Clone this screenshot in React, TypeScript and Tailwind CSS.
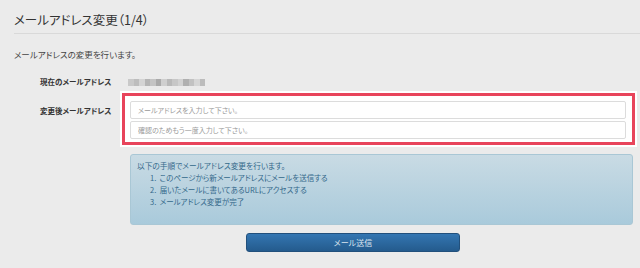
import React from 'react';

const steps = [
  'このページから新メールアドレスにメールを送信する',
  '届いたメールに書いてあるURLにアクセスする',
  'メールアドレス変更が完了',
];

// pixel shades for the masked current address
const maskShades = ['#c9c9c9', '#bdbdbd', '#d4d4d4', '#b5b5b5', '#c4c4c4', '#aaaaaa', '#cfcfcf', '#b9b9b9', '#c7c7c7', '#d2d2d2', '#b0b0b0', '#c2c2c2', '#d6d6d6', '#bcbcbc'];

export default function App() {
  return (
    <div className="w-[640px] h-[268px] overflow-hidden bg-[#ebebeb] text-[#333] font-['Noto_Sans_CJK_JP','Noto_Sans',sans-serif] [font-feature-settings:'palt']">
      {/* Header */}
      <div className="pl-[14px]">
        <h2 className="pt-[10px] pb-[4px] text-[12.5px] leading-[19px] font-normal text-[#333] border-b border-[#d9d9d9]">
          メールアドレス変更（1/4）
        </h2>
      </div>

      <p className="pl-[14px] mt-[14px] text-[8.5px] leading-[12px] text-[#444]">
        メールアドレスの変更を行います。
      </p>

      {/* Current address */}
      <div className="flex items-center mt-[16px] h-[12px]">
        <div className="w-[128px] pl-[40px] text-[7.5px] font-bold whitespace-nowrap text-[#333]">現在のメールアドレス</div>
        <div className="flex h-[7px] blur-[0.6px]">
          {maskShades.map((c, i) => (
            <span key={i} className="w-[5.5px] h-full" style={{ backgroundColor: c }} />
          ))}
        </div>
      </div>

      {/* New address (highlighted) */}
      <div className="flex mt-[3px]">
        <div className="w-[120px] pl-[40px] pt-[14px] text-[7.5px] leading-[12px] font-bold whitespace-nowrap text-[#333]">変更後メールアドレス</div>
        <div className="w-[517px] border-2 border-white">
          <div className="border-[3px] border-[#e8445b] bg-white pt-[5px] pb-[3px] pl-[5px] pr-[6px] flex flex-col gap-[2px]">
            <input
              className="h-[18px] w-full rounded-[2px] border border-[#dcdcdc] bg-white px-[7px] text-[7px] outline-none placeholder:text-[#9a9a9a]"
              placeholder="メールアドレスを入力して下さい。"
            />
            <input
              className="h-[18px] w-full rounded-[2px] border border-[#dcdcdc] bg-white px-[7px] text-[7px] outline-none placeholder:text-[#9a9a9a]"
              placeholder="確認のためもう一度入力して下さい。"
            />
          </div>
        </div>
      </div>

      {/* Steps info */}
      <div className="ml-[130px] mt-[7px] w-[503px] h-[71px] rounded-[3px] border border-[#a9c7d5] bg-gradient-to-b from-[#c9dbe4] to-[#a9cadb] pl-[6px] pt-[5px] text-[7.7px] leading-[12px] text-[#33688a]">
        <p>以下の手順でメールアドレス変更を行います。</p>
        <ol className="pl-[13px] text-[7.5px]">
          {steps.map((s, i) => (
            <li key={i}>
              {i + 1}.&nbsp;&nbsp;{s}
            </li>
          ))}
        </ol>
      </div>

      {/* Submit */}
      <button className="ml-[246px] mt-[8px] w-[214px] h-[19px] rounded-[3px] border border-[#22507c] bg-gradient-to-b from-[#3476b2] to-[#245b8d] text-[8px] text-[#dbe5ef]">
        メール送信
      </button>
    </div>
  );
}
